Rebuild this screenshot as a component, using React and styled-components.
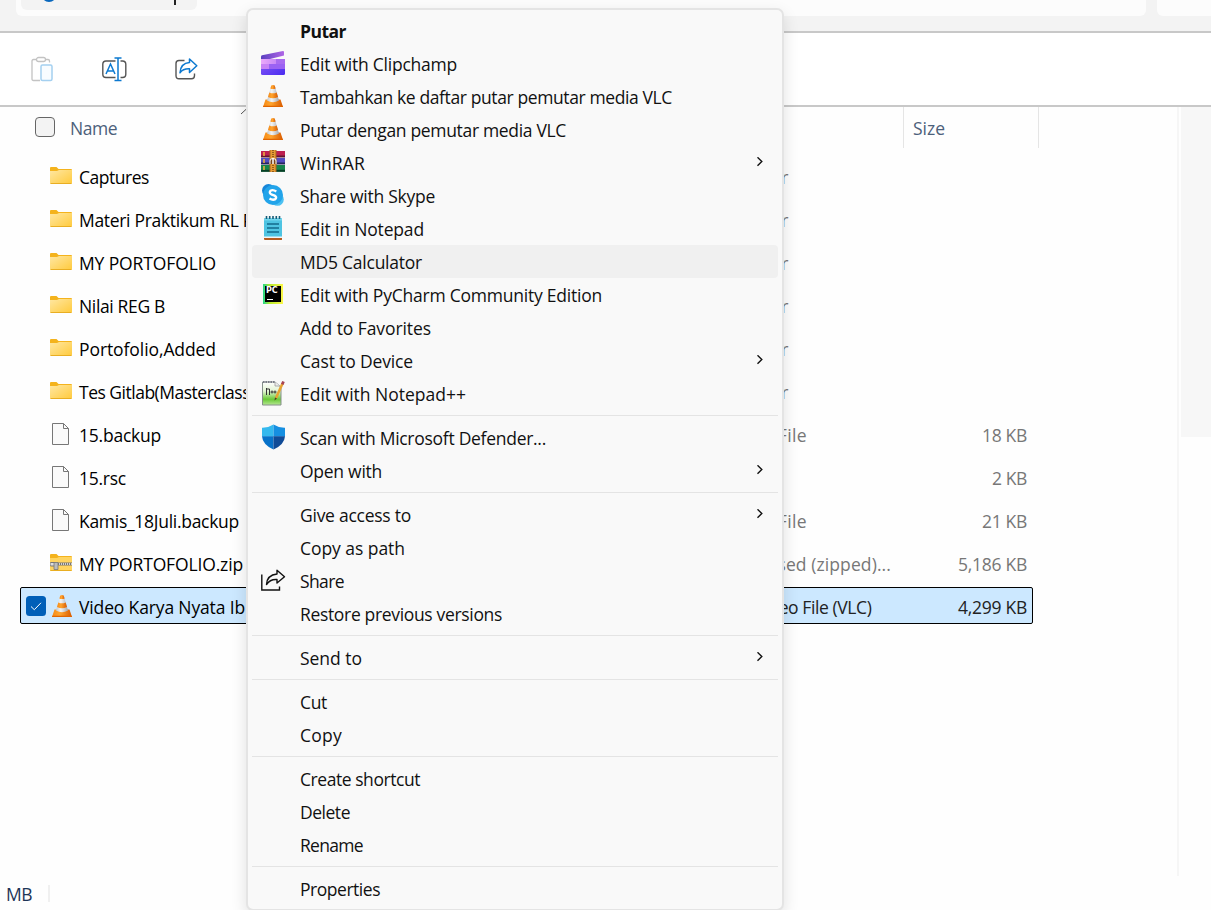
import React, { useLayoutEffect, useRef } from "react";
import styled, { createGlobalStyle } from "styled-components";

const Global = createGlobalStyle`
  * { box-sizing: border-box; }
  body { margin: 0; background: #fff; overflow: hidden; }
  svg { display: block; flex: none; }
`;

const Window = styled.div`
  position: relative;
  width: 1211px;
  height: 910px;
  overflow: hidden;
  display: flex;
  flex-direction: column;
  background: #fefefe;
  color: #000;
  font-family: "Open Sans", "Noto Sans", sans-serif;
  font-size: 17.5px;
`;

const AddressStrip = styled.div`
  display: flex;
  gap: 11px;
  height: 33px;
  flex: none;
  padding-left: 16px;
  background: #f3f3f3;
  border-bottom: 2px solid #c8c8c8;
`;
const AddressBar = styled.div`
  width: 1130px;
  height: 16px;
  padding-left: 5px;
  background: #fcfcfc;
  border-radius: 0 0 6px 6px;
`;
const Crumb = styled.div`
  display: flex;
  width: 176px;
  height: 10px;
  padding-left: 20px;
  background: #f3f3f3;
  border-radius: 0 0 6px 6px;
`;
const CrumbTail = styled.span`
  width: 2px;
  height: 5px;
  margin-left: 117px;
  background: #222;
`;
const SearchBar = styled.div`
  flex: 1;
  height: 16px;
  background: #fcfcfc;
  border-radius: 0 0 0 6px;
`;

const Toolbar = styled.div`
  display: flex;
  align-items: center;
  gap: 48px;
  height: 74px;
  flex: none;
  padding-left: 30px;
  background: #fff;
  border-bottom: 2px solid #c8c8c8;
`;

const Content = styled.div`
  display: flex;
  height: 769px;
  flex: none;
`;
const Listing = styled.div`
  width: 1179px;
  border-right: 2px solid #f6f6f6;
`;
const Scroll = styled.div`
  width: 30px;
  height: 330px;
  margin-left: 2px;
  background: #f7f7f7;
`;

const Header = styled.div`
  display: flex;
  height: 41px;
  color: #4c607a;
  line-height: 43px;
`;
const NameHeader = styled.div`
  display: flex;
  width: 903px;
  padding-left: 35px;
`;
const HeaderBox = styled.span`
  width: 20px;
  height: 20px;
  margin: 10px 15px 0 0;
  border: 1px solid #666;
  border-radius: 4px;
  background: #f3f3f3;
`;
const SizeHeader = styled.div`
  width: 136px;
  padding-left: 9px;
  border: solid #e5e5e5;
  border-width: 0 1px;
`;
const SortMark = styled.svg`
  margin: 0 0 0 124px;
`;

const Files = styled.div`
  padding: 6px 0 0 20px;
`;
const FileRow = styled.div`
  display: flex;
  align-items: center;
  width: 1013px;
  height: 37px;
  margin-bottom: 6px;
  padding: 0 5px 0 14px;
  border: 1px solid ${(p) => (p.$selected ? "#000" : "transparent")};
  border-radius: 2px;
  background: ${(p) => (p.$selected ? "#cce8ff" : "transparent")};
  color: ${(p) => (p.$selected ? "#222" : "#777")};
  &:first-child { margin-top: 3px; }
`;
const CheckSlot = styled.span`
  display: flex;
  width: 20px;
  margin-left: -9px;
  margin-right: 4px;
`;
const IconSlot = styled.span`
  display: flex;
  width: 24px;
  height: 28px;
  align-items: center;
  margin-right: 5px;
`;
const FileName = styled.span`
  width: 624px;
  color: #000;
  padding-top: 3px;
`;
const FileType = styled.span`
  flex: 1;
  padding-top: 3px;
`;
const FileSize = styled.span`
  padding-top: 3px;
`;

const StatusBar = styled.div`
  display: flex;
  align-items: center;
  height: 34px;
  padding: 2px 0 0 6px;
  color: #1d3557;
`;
const StatusDivider = styled.span`
  width: 2px;
  height: 17px;
  margin: -2px 0 0 16px;
  background: #f0f0f0;
`;

const Menu = styled.div`
  position: absolute;
  left: 246px;
  top: 8px;
  width: 538px;
  padding: 4px;
  border: 2px solid #e4e4e4;
  border-radius: 7px;
  background: #f9f9f9;
  box-shadow: 0 6px 16px rgba(0, 0, 0, 0.12);
`;
const MenuRow = styled.div`
  display: flex;
  align-items: center;
  height: 33px;
  padding: 0 13px 0 9px;
  border-radius: 4px;
  background: ${(p) => (p.$hover ? "#f0f0f0" : "transparent")};
  font-weight: ${(p) => (p.$bold ? 700 : 400)};
  color: #111;
`;
const MenuIcon = styled.span`
  display: flex;
  width: 24px;
  height: 26px;
  margin-right: 15px;
  margin-top: -1px;
  align-items: center;
`;
const MenuLabel = styled.span`
  flex: 1;
  line-height: 33px;
  padding-top: 1px;
`;
const Separator = styled.div`
  height: 1px;
  margin: 5px 0;
  background: #e4e4e4;
`;

const FitSpan = styled.span`
  display: inline-block;
  white-space: pre;
`;

// Spreads the tracking so that the label takes exactly `width` pixels.
function Fit({ width, children }) {
  const ref = useRef(null);
  useLayoutEffect(() => {
    const el = ref.current;
    const apply = () => {
      el.style.letterSpacing = "0px";
      const natural = el.getBoundingClientRect().width;
      el.style.letterSpacing = `${(width - natural) / children.length}px`;
    };
    apply();
    document.fonts.ready.then(apply);
  }, [width, children]);
  return <FitSpan ref={ref}>{children}</FitSpan>;
}

const Clipchamp = () => (
  <svg width="24" height="24" viewBox="0 0 24 24">
    <defs>
      <linearGradient id="cc1" x1="0" y1="0" x2="1" y2="0"><stop stopColor="#5a3fc0" /><stop offset="1" stopColor="#b067e6" /></linearGradient>
      <linearGradient id="cc2" x1="0" y1="0" x2="1" y2="1"><stop stopColor="#8a5bf6" /><stop offset="1" stopColor="#4a2cf0" /></linearGradient>
      <linearGradient id="cc3" x1="0" y1="0" x2="1" y2="0"><stop stopColor="#eba9fb" /><stop offset="1" stopColor="#c98af6" /></linearGradient>
    </defs>
    <path d="M0 5.500Q0 4.500 1 4.200L22 0Q23 0 23 1V4.500L9 8H0Z" fill="url(#cc1)" />
    <path d="M0 8H24V22.500Q24 24 22.500 24H1.500Q0 24 0 22.500Z" fill="url(#cc2)" />
    <path d="M0 8H15V13H0Z" fill="url(#cc3)" /><path d="M15 8H24V13H15Z" fill="#a96bf0" />
    <path d="M0 13H8V18H0Z" fill="#c883f5" /><path d="M8 13H24V18H8Z" fill="#9b62f3" />
  </svg>
);
const Vlc = () => (
  <svg width="24" height="24" viewBox="0 0.5 24 24">
    <defs>
      <linearGradient id="vl1"><stop stopColor="#f58a16" /><stop offset=".4" stopColor="#ffa42e" /><stop offset="1" stopColor="#d85a00" /></linearGradient>
      <linearGradient id="vl2"><stop stopColor="#c4c8cc" /><stop offset=".4" stopColor="#f4f4f4" /><stop offset="1" stopColor="#a6a9ac" /></linearGradient>
    </defs>
    <path d="M4.500 16H19.500L22 23.500H2Z" fill="url(#vl1)" />
    <path d="M2.300 22.300H21.700L22 23.500H2Z" fill="#e06500" />
    <path d="M10.300 2Q12 .8 13.700 2L18 17Q12 20.500 6 17Z" fill="url(#vl2)" />
    <path d="M10.300 2Q12 .8 13.700 2L14.600 5Q12 6.200 9.400 5Z" fill="url(#vl1)" />
    <path d="M8.300 9Q12 10.700 15.700 9L17 13.500Q12 16 7 13.500Z" fill="url(#vl1)" />
  </svg>
);
const WinRar = () => (
  <svg width="24" height="24" viewBox="0 0 24 24">
    <path d="M0 1H24V7H0Z" fill="#bd1f50" /><path d="M0 5.500H24V7.500H0Z" fill="#621630" />
    <path d="M0 8H24V14H0Z" fill="#514cc0" /><path d="M0 12.500H24V14.500H0Z" fill="#28265f" />
    <path d="M0 15H24V21.500H0Z" fill="#16854b" /><path d="M0 19.800H24V21.800H0Z" fill="#063f25" />
    <path d="M3 2V6M3 9V13M3 16V20" stroke="#f0b23c" strokeWidth="1.500" />
    <path d="M8.500 0H15.500V22H8.500Z" fill="#a96520" /><path d="M9.500 0H14.500V22H9.500Z" fill="#e59b34" />
    <path d="M12 0V8M12 15V22" stroke="#5b3210" strokeWidth="1.200" strokeDasharray="1 1" />
    <path d="M9 14V11Q9 8.500 12 8.500Q15 8.500 15 11V14" fill="#7a4318" stroke="#e6e2d8" strokeWidth="1.200" />
    <path d="M12 8V14" stroke="#fff" strokeWidth="1.500" />
  </svg>
);
const Skype = () => (
  <svg width="24" height="24" viewBox="0 0 24 24">
    <circle cx="7.500" cy="7.500" r="6.500" fill="#1686d9" /><circle cx="16.500" cy="16.500" r="6.300" fill="#4cc1f2" />
    <circle cx="12" cy="12" r="10" fill="#22a4ea" />
    <path d="M15.300 8.500Q12 6.300 9.500 7.700Q7.800 9.900 10.300 11.300L13.600 12.600Q16.300 14.200 14.300 16.100Q11.800 17.600 8.500 15.500" fill="none" stroke="#fff" strokeWidth="2.400" />
  </svg>
);
const Notepad = () => (
  <svg width="24" height="26" viewBox="0 0.5 24 26">
    <path d="M3 22H21V25Q21 25.500 20 25.500H4Q3 25.500 3 24.500Z" fill="#b55b1f" /><path d="M3 21H21V23.500H3Z" fill="#eef5f7" />
    <path d="M3 3.500H21V22H3Z" fill="#4fc4e2" /><path d="M3 3.500H21V6H3Z" fill="#72d5ec" />
    <path d="M6 9.500H18M6 13.500H18M6 17.500H18" stroke="#136a8c" strokeWidth="1.600" />
    <path d="M5.500 1.500V4.500M8.700 1.500V4.500M12 1.500V4.500M15.300 1.500V4.500M18.500 1.500V4.500" stroke="#155d78" strokeWidth="1.600" />
  </svg>
);
const PcBadge = styled.span`
  width: 20px;
  height: 20px;
  margin: 0 0 0 2px;
  padding: 2px;
  background: linear-gradient(90deg, #21d789, #b9ea2b 35%, #fcf84a);
`;
const PcInner = styled.span`
  display: block;
  height: 16px;
  padding-left: 1px;
  background: #000;
  color: #fff;
  font: bold 8px/10px "DejaVu Sans", sans-serif;
  &::after { content: ""; display: block; width: 6px; height: 1px; margin: 3px 0 0 1px; background: #fff; }
`;
const PyCharm = () => <PcBadge><PcInner>PC</PcInner></PcBadge>;
const NotepadPlus = () => (
  <svg width="24" height="26" viewBox="0 0 24 26">
    <defs><linearGradient id="np" x1="0" y1="0" x2="0" y2="1"><stop stopColor="#fff" /><stop offset=".4" stopColor="#e2f4d2" /><stop offset=".75" stopColor="#69c936" /><stop offset="1" stopColor="#b6e793" /></linearGradient></defs>
    <path d="M1.500 2H14L20 7V25H1.500Z" fill="url(#np)" stroke="#85908a" />
    <path d="M14 2V6H19" fill="#eee" stroke="#999" strokeWidth=".8" />
    <path d="M2 2H14" stroke="#667" strokeWidth="1.500" strokeDasharray="1.500 1" />
    <path d="M5.500 15V8M5.500 9H8.500V15M9.500 12H12.500M11 10.500V13.500M12.500 12H15.500M14 10.500V13.500" fill="none" stroke="#333" />
    <path d="M21.500 3.500L15 18" stroke="#e7a432" strokeWidth="2.600" /><path d="M22.500 1.500L21.200 4.300" stroke="#a94452" strokeWidth="2.800" /><path d="M14 17.500L13.500 20.500L16 18.500Z" fill="#4c3b22" />
  </svg>
);
const Defender = () => (
  <svg width="25" height="26" viewBox="0 0 25 26">
    <path d="M12.500 .5Q7 4 1 3.800V12.500H12.500Z" fill="#35b9ee" /><path d="M12.500 .5Q18 4 24 3.800V12.500H12.500Z" fill="#168fe1" />
    <path d="M1 12.200H12.500V25.500Q1.500 20.500 1 12.200Z" fill="#0872c9" /><path d="M24 12.200H12.500V25.500Q23.500 20.500 24 12.200Z" fill="#104b97" />
  </svg>
);
const MenuShare = () => (
  <svg width="25" height="24" viewBox="0 -0.5 25 24" fill="none" stroke="#111" strokeWidth="1.400">
    <path d="M.8 6V21.500H18.500V18" /><path d="M16 1.800L23.500 8.300L16 14.500V11Q9 10.500 5.500 16Q6 6.500 16 5.500Z" strokeLinejoin="round" />
  </svg>
);
const Chevron = () => (
  <svg width="9" height="12" viewBox="0.5 0.5 9 12"><path d="M2 0.800L6.300 5L2 9.200" fill="none" stroke="#111" strokeWidth="1.400" /></svg>
);

const Folder = () => (
  <svg width="22" height="20" viewBox="0 -0.5 22 20">
    <defs><linearGradient id="fd" x1="0" y1="0" x2="1" y2="1"><stop stopColor="#ffe7a2" /><stop offset="1" stopColor="#ffca3c" /></linearGradient></defs>
    <path d="M0 1.500Q0 .5 1 .5H6.500L8.500 2.500H21Q22 2.500 22 3.500V7H0Z" fill="#f4b31d" />
    <path d="M0 4.500H7L9 3.500H22V16Q22 17.500 20.500 17.500H1.500Q0 17.500 0 16Z" fill="url(#fd)" />
    <path d="M.5 17H21.500" stroke="#e9ae22" />
  </svg>
);
const Zip = () => (
  <svg width="22" height="20" viewBox="0 -0.5 22 20">
    <path d="M0 1.500Q0 .5 1 .5H6.500L8.500 2.500H21Q22 2.500 22 3.500V7H0Z" fill="#f4b31d" />
    <path d="M0 4.500H7L9 3.500H22V17.500H0Z" fill="#ffd45f" /><path d="M.5 17H21.500" stroke="#e9ae22" />
    <path d="M7 10.500H22" stroke="#777" strokeWidth="3" /><path d="M7 10.500H22" stroke="#eee" strokeWidth="1.500" strokeDasharray="1 1" />
    <rect x="0" y="9" width="6.500" height="3.500" rx="1" fill="#ddd" stroke="#777" /><path d="M4 9H8V16H4Z" fill="#bbb" stroke="#777" strokeWidth=".8" />
  </svg>
);
const Paper = () => (
  <svg width="22" height="26" viewBox="0 0 22 26">
    <path d="M2.500 2.500H13.500L18.500 7.500V23.500H2.500Z" fill="#fafafa" stroke="#777" /><path d="M13.500 2.500V7.500H18.500" fill="none" stroke="#777" />
  </svg>
);
const Checked = () => (
  <svg width="20" height="20" viewBox="0 0 20 20"><rect width="20" height="20" rx="3.500" fill="#005fb8" /><path d="M5 10.500L8.300 13.700L15 6.800" fill="none" stroke="#fff" strokeWidth="1" /></svg>
);

const PasteTool = () => (
  <svg width="24" height="26" viewBox="0 -0.5 24 26" fill="none">
    <path d="M10 24H3.500Q2 24 2 22.500V4.500Q2 3 3.500 3H6M16 3H18Q19.500 3 19.500 4.500V6" stroke="#c3c3c3" strokeWidth="1.300" />
    <rect x="6.500" y="1" width="9" height="4" rx="2" stroke="#c3c3c3" strokeWidth="1.300" />
    <rect x="11" y="8.500" width="11" height="15.500" rx="1.500" fill="#f8fcff" stroke="#a4d0f0" strokeWidth="1.500" />
  </svg>
);
const RenameTool = () => (
  <svg width="25" height="26" viewBox="0 -0.5 25 26" fill="none">
    <path d="M13.500 4.500H4Q.8 4.500 .8 7.700V17.800Q.8 21 4 21H13.500M18.500 4.500H20.500Q23.800 4.500 23.800 7.700V17.800Q23.800 21 20.500 21H18.500" stroke="#555" strokeWidth="1.400" />
    <path d="M4 17.500L8.500 7.500L13 17.500M5.500 14.500H11.500M12.500 1.500H19.500M16 1.500V24M12.500 24H19.500" stroke="#0c79d0" strokeWidth="1.500" />
  </svg>
);
const ShareTool = () => (
  <svg width="24" height="24" viewBox="0.5 0 24 24" fill="none">
    <path d="M10 3.500H4.500Q1.500 3.500 1.500 6.500V18.500Q1.500 21.800 4.500 21.800H17Q20 21.800 20 18.500V16.500" stroke="#555" strokeWidth="1.400" />
    <path d="M15 2L22.300 8.800L15 15.500V11.800Q8.500 11.500 5.500 15.800Q6.200 6 15 5.500Z" stroke="#0c79d0" strokeWidth="1.500" strokeLinejoin="round" />
  </svg>
);

const files = [
  ["Captures", 70, Folder, "File folder", 86, "", 0],
  ["Materi Praktikum RL P", 174, Folder, "File folder", 86, "", 0],
  ["MY PORTOFOLIO", 137, Folder, "File folder", 86, "", 0],
  ["Nilai REG B", 86, Folder, "File folder", 86, "", 0],
  ["Portofolio,Added", 137, Folder, "File folder", 86, "", 0],
  ["Tes Gitlab(Masterclass", 171, Folder, "File folder", 86, "", 0],
  ["15.backup", 82, Paper, "BACKUP File", 104, "18 KB", 45],
  ["15.rsc", 47, Paper, "RSC File", 69, "2 KB", 35],
  ["Kamis_18Juli.backup", 160, Paper, "BACKUP File", 104, "21 KB", 45],
  ["MY PORTOFOLIO.zip", 164, Zip, "Compressed (zipped)...", 188, "5,186 KB", 69],
  ["Video Karya Nyata Ib", 166, Vlc, "MPEG Video File (VLC)", 168.500, "4,299 KB", 69],
];

const menu = [
  ["Putar", 46, null],
  ["Edit with Clipchamp", 157, Clipchamp],
  ["Tambahkan ke daftar putar pemutar media VLC", 372, Vlc],
  ["Putar dengan pemutar media VLC", 266, Vlc],
  ["WinRAR", 65, WinRar, true],
  ["Share with Skype", 135, Skype],
  ["Edit in Notepad", 124, Notepad],
  ["MD5 Calculator", 122, null],
  ["Edit with PyCharm Community Edition", 302, PyCharm],
  ["Add to Favorites", 131, null],
  ["Cast to Device", 113, null, true],
  ["Edit with Notepad++", 166, NotepadPlus],
  null,
  ["Scan with Microsoft Defender...", 246, Defender],
  ["Open with", 82, null, true],
  null,
  ["Give access to", 111, null, true],
  ["Copy as path", 105, null],
  ["Share", 44, MenuShare],
  ["Restore previous versions", 202, null],
  null,
  ["Send to", 62, null, true],
  null,
  ["Cut", 27, null],
  ["Copy", 42, null],
  null,
  ["Create shortcut", 120, null],
  ["Delete", 50, null],
  ["Rename", 63, null],
  null,
  ["Properties", 80, null],
];

export default function App() {
  return (
    <Window>
      <Global />
      <AddressStrip>
        <AddressBar>
          <Crumb>
            <svg width="16" height="3" viewBox="0 0 16 3"><circle cx="8" cy="-5.500" r="7.500" fill="#0867bd" /></svg>
            <CrumbTail />
          </Crumb>
        </AddressBar>
        <SearchBar />
      </AddressStrip>
      <Toolbar><PasteTool /><RenameTool /><ShareTool /></Toolbar>
      <Content>
        <Listing>
          <Header>
            <NameHeader>
              <HeaderBox />
              <Fit width={47}>Name</Fit>
              <SortMark width="7" height="8" viewBox="0 0 7 8"><path d="M0 7L7 .5" stroke="#555" /></SortMark>
            </NameHeader>
            <SizeHeader><Fit width={32}>Size</Fit></SizeHeader>
          </Header>
          <Files>
            {files.map(([name, w, Icon, type, tw, size, sw], i) => (
              <FileRow key={name} $selected={i === 10}>
                <CheckSlot>{i === 10 && <Checked />}</CheckSlot>
                <IconSlot><Icon /></IconSlot>
                <FileName><Fit width={w}>{name}</Fit></FileName>
                <FileType><Fit width={tw}>{type}</Fit></FileType>
                {size && <FileSize><Fit width={sw}>{size}</Fit></FileSize>}
              </FileRow>
            ))}
          </Files>
        </Listing>
        <Scroll />
      </Content>
      <StatusBar><Fit width={26}>MB</Fit><StatusDivider /></StatusBar>
      <Menu>
        {menu.map((item, i) => {
          if (!item) return <Separator key={i} />;
          const [label, w, Icon, sub] = item;
          return (
            <MenuRow key={i} $bold={i === 0} $hover={i === 7}>
              <MenuIcon>{Icon && <Icon />}</MenuIcon>
              <MenuLabel><Fit width={w}>{label}</Fit></MenuLabel>
              {sub && <Chevron />}
            </MenuRow>
          );
        })}
      </Menu>
    </Window>
  );
}
